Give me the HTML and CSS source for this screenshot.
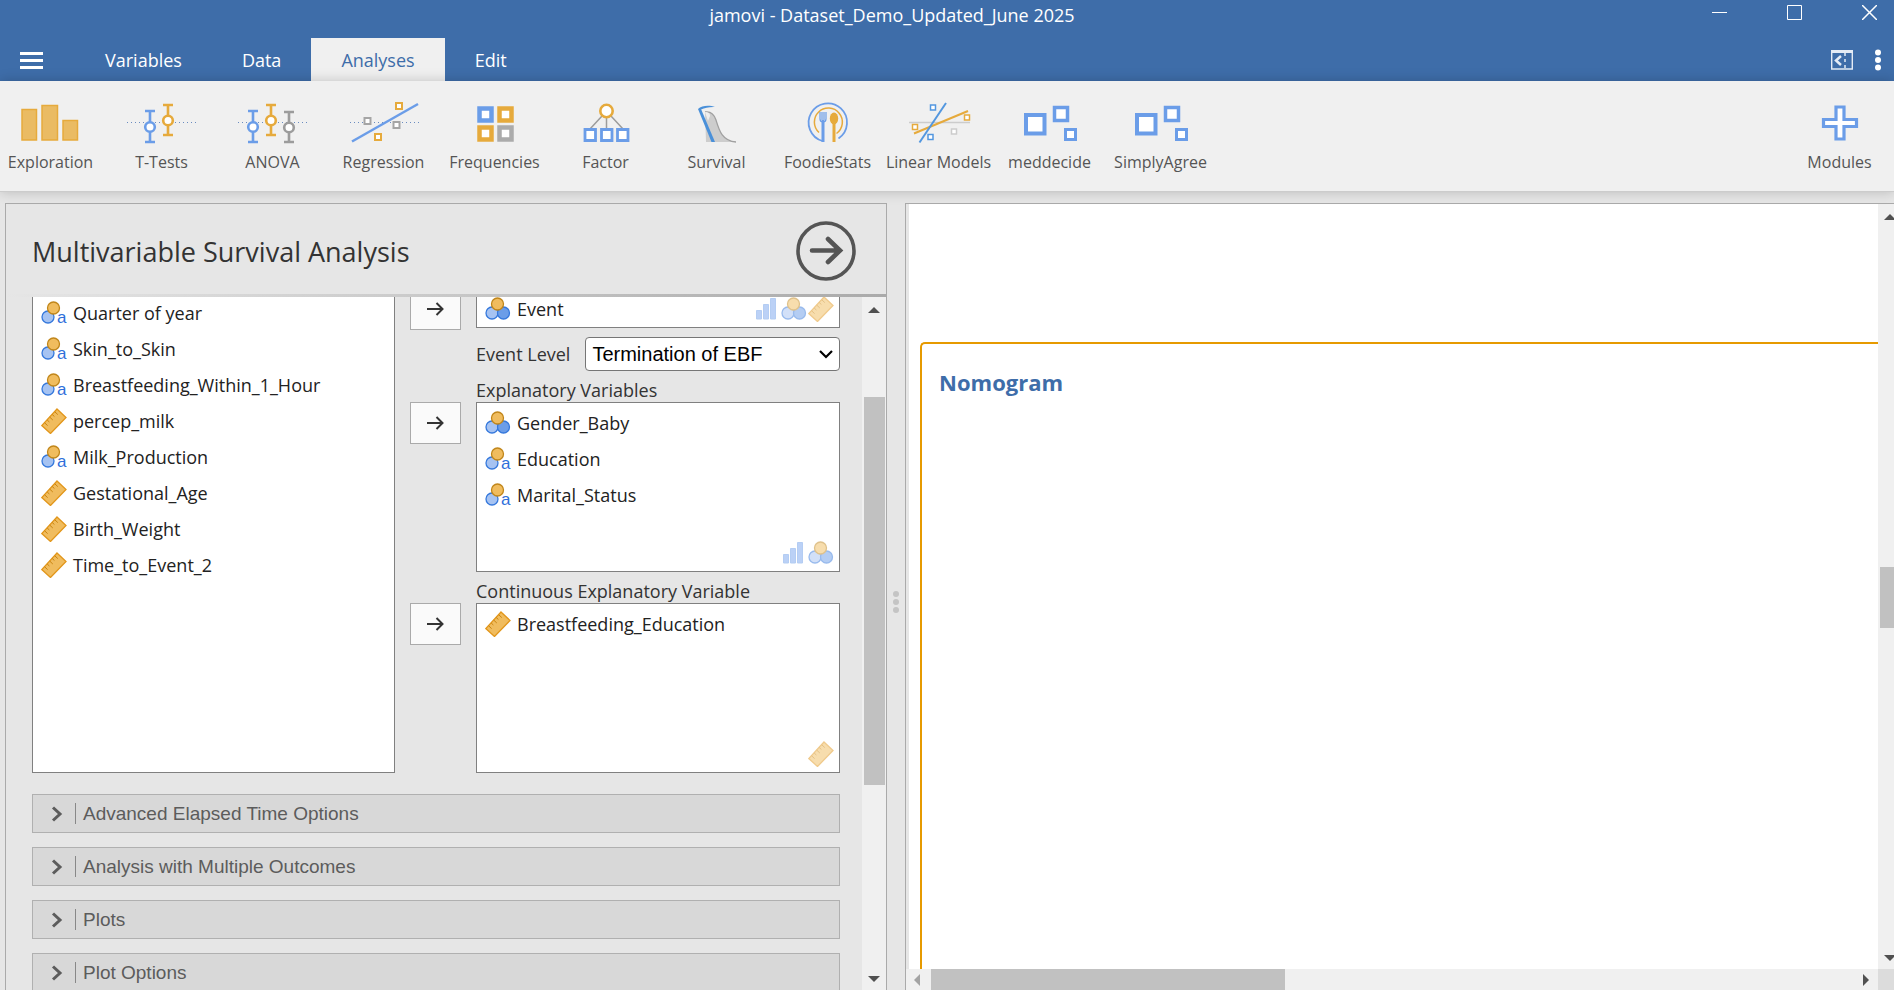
FILE: index.html
```
<!DOCTYPE html>
<html lang="en">
  <head>
    <meta charset="UTF-8" />
    <meta name="viewport" content="width=device-width, initial-scale=1.0" />
    <title>jamovi - Dataset_Demo_Updated_June 2025</title>
    <link rel="stylesheet" href="styles.css">
  </head>
  <body>
    <!-- shared icons -->
    <svg class="sprite" aria-hidden="true">
      <symbol id="nominal" viewBox="0 0 26 26">
        <circle cx="7" cy="17" r="6" fill="#a6c3f2" stroke="#3578dc" stroke-width="1.3" />
        <circle cx="18.500" cy="17" r="6" fill="#6b9de8" stroke="#3578dc" stroke-width="1.3" />
        <circle cx="12.5" cy="8" r="6" fill="#f0bc5e" stroke="#c1861a" stroke-width="1.3" />
      </symbol>
      <symbol id="nominal-text" viewBox="0 0 26 26">
        <circle cx="7" cy="17" r="6" fill="#a6c3f2" stroke="#3578dc" stroke-width="1.3" />
        <circle cx="12.5" cy="8" r="6" fill="#f0bc5e" stroke="#c1861a" stroke-width="1.3" />
        <text x="16" y="23" class="icon-letter">a</text>
      </symbol>
      <symbol id="continuous" viewBox="0 0 26 26">
        <path d="M16 1 L25 9.5 L9.5 25.5 L0.8 17.5 Z" fill="#f0bc5e" stroke="#e2961a" stroke-width="1.3" />
        <path d="M3.6 14.8l3 2.8M6.2 12l2.2 2M8.8 9.2l3 2.8M11.2 6.5l2.2 2M13.8 3.8l3 2.8" stroke="#c98410" stroke-width="1" fill="none" />
      </symbol>
      <symbol id="ordinal" viewBox="0 0 26 26">
        <path d="M2.500 14.500h5v8.500h-5zM9.500 8.500h5v14.500h-5zM16.500 2.500h5v20.500h-5z" fill="#79a5ee" stroke="#6b9de8" />
      </symbol>
      <symbol id="arrow" viewBox="0 0 20 16">
        <path d="M1 8h16M10.500 2l6 6-6 6" fill="none" stroke="#333" stroke-width="2" />
      </symbol>
      <symbol id="chevron" viewBox="0 0 12 16">
        <path d="M2 1.500l7 6.500-7 6.500" fill="none" stroke="#5c5c5c" stroke-width="3" />
      </symbol>
      <symbol id="module" viewBox="0 0 70 50">
        <g fill="#fff" stroke="#6b9de8">
          <path d="M11 17h18.500v18.500h-18.500z" stroke-width="4" />
          <path d="M39.500 9.500h13v13h-13z" stroke-width="3.500" />
          <path d="M50.500 31.500h10v10h-10z" stroke-width="3" />
        </g>
      </symbol>
    </svg>

    <header class="title-bar">
      <div class="title">jamovi - Dataset_Demo_Updated_June 2025</div>
      <div class="window-controls">
        <button aria-label="Minimize"><svg width="15" height="15"><path d="M0 7.500h15" /></svg></button>
        <button aria-label="Maximize"><svg width="15" height="15"><path d="M.5.5h14v14H.5z" /></svg></button>
        <button aria-label="Close"><svg width="15" height="15"><path d="M0 0l15 15M15 0L0 15" stroke-width="1.500" /></svg></button>
      </div>
    </header>

    <nav class="tabs">
      <button class="menu" aria-label="Menu"><span></span><span></span><span></span></button>
      <button class="tab">Variables</button>
      <button class="tab">Data</button>
      <button class="tab active">Analyses</button>
      <button class="tab">Edit</button>
      <div class="tab-tools">
        <button aria-label="Toggle panel">
          <svg width="22" height="20" fill="none" stroke="#e4ebf5">
            <path d="M.7 1h20.600v18H.7z" stroke-width="1.400" />
            <path d="M0 1.500h22" stroke-width="3" />
            <path d="M14 3v16" stroke-width="1.500" stroke-dasharray="3 3" />
            <path d="M10 6l-5 4.500 5 4.500" stroke-width="2.500" />
          </svg>
        </button>
        <button aria-label="More">
          <svg width="6" height="22" fill="#fff"><circle cx="3" cy="3.500" r="3" /><circle cx="3" cy="11" r="3" /><circle cx="3" cy="18.500" r="3" /></svg>
        </button>
      </div>
    </nav>

    <div class="ribbon">
      <button class="tool">
        <svg viewBox="0 0 70 50" fill="#eabb63" stroke="#e6aa3c" stroke-width="1.500">
          <path d="M6 11.500h14.500v30.500H6zM26 7.500h15.500v34.500H26zM47 22.500h14.500v19.500H47z" />
        </svg>
        Exploration
      </button>
      <button class="tool">
        <svg viewBox="0 0 70 50" fill="#fff" stroke-width="2.600">
          <path class="dotted" d="M0 24.500h69" />
          <g stroke="#6b9de8"><path d="M23 13v31M18 13h10M18 44h10" /><circle cx="23" cy="29" r="4.800" /></g>
          <g stroke="#e6aa3c"><path d="M41 7v30M36 7h10M36 37h10" /><circle cx="41" cy="22.500" r="4.800" /></g>
        </svg>
        T-Tests
      </button>
      <button class="tool">
        <svg viewBox="0 0 70 50" fill="#fff" stroke-width="2.600">
          <path class="dotted" d="M0 24.500h69" />
          <g stroke="#6b9de8"><path d="M15 13v31M10 13h10M10 44h10" /><circle cx="15" cy="29" r="4.800" /></g>
          <g stroke="#e6aa3c"><path d="M33 7v30M28 7h10M28 37h10" /><circle cx="33" cy="22.500" r="4.800" /></g>
          <g stroke="#9c9c9c"><path d="M51 14v30M46 14h10M46 44h10" /><circle cx="51" cy="29.500" r="4.800" /></g>
        </svg>
        ANOVA
      </button>
      <button class="tool">
        <svg viewBox="0 0 70 50" fill="#fff" stroke-width="2">
          <path class="dotted" d="M1 24.500h69" />
          <path d="M3 43.500L69 6" stroke="#6b9de8" stroke-width="2.500" />
          <path d="M15.500 20h6v6h-6zM44.500 24h6v6h-6z" stroke="#a5a5a5" />
          <path d="M47 5h6v6h-6zM26 36h6v6h-6z" stroke="#e6aa3c" />
        </svg>
        Regression
      </button>
      <button class="tool">
        <svg viewBox="0 0 70 50" fill="#fff" stroke-width="4.500">
          <path d="M19.500 10.500h12v12h-12z" stroke="#6b9de8" />
          <path d="M39.500 10.500h12v12h-12zM19.500 29.500h12v12h-12z" stroke="#e6aa3c" />
          <path d="M39.500 29.500h12v12h-12z" stroke="#ababab" />
        </svg>
        Frequencies
      </button>
      <button class="tool">
        <svg viewBox="0 0 70 50" fill="#fff">
          <path d="M31 18L19 31M35.500 19v12M40 18l12 13" stroke="#9c9c9c" stroke-width="1.500" />
          <circle cx="35.500" cy="13" r="6.200" stroke="#e6aa3c" stroke-width="2.600" />
          <path d="M14 31.500h10.500v11H14zM30.500 31.500h10.500v11H30.500zM46.500 31.500h10.500v11H46.500z" stroke="#6b9de8" stroke-width="2.800" />
        </svg>
        Factor
      </button>
      <button class="tool">
        <svg viewBox="0 0 70 50" fill="none">
          <path d="M23 14c6-1 9 2 11 8 3 10 6 21 20 22H24z" fill="#cdcdcd" />
          <path d="M23 14c6-1 9 2 11 8 3 10 6 21 20 22" stroke="#a0a0a0" stroke-width="1.300" />
          <path d="M23 14l3 9 2-5c0-3-2-4-5-4z" fill="#eee" />
          <path d="M16 11l3 0 14 33h-3.500z" fill="#4a90d9" />
          <path d="M16 11c4-4 12-4 17-2-6-.3-10 1-14 2.500z" fill="#4a90d9" />
        </svg>
        Survival
      </button>
      <button class="tool">
        <svg viewBox="0 0 70 50" fill="none">
          <path d="M29.500 43A19.200 19.200 0 1 1 45.500 40.500" stroke="#6b9de8" stroke-width="1.800" />
          <path d="M26 34.500A14 14 0 1 1 43.500 35.500" stroke="#e6aa3c" stroke-width="1.500" />
          <path d="M27 14v7c0 4 6 4 6 0v-7M29 14v8M31 14v8" stroke="#6b9de8" stroke-width="1.200" />
          <path d="M30 22v22" stroke="#6b9de8" stroke-width="3" />
          <ellipse cx="41" cy="20.500" rx="4.200" ry="6" fill="#e6aa3c" />
          <path d="M41 24v20" stroke="#e6aa3c" stroke-width="3" />
        </svg>
        FoodieStats
      </button>
      <button class="tool">
        <svg viewBox="0 0 70 50" fill="#fff" stroke-width="1.500">
          <path d="M5 24.500h61" stroke="#ccc" />
          <path d="M10 35.500L64 13" stroke="#e6aa3c" stroke-width="2" />
          <path d="M15.500 44.500L42 5" stroke="#5397df" stroke-width="2" />
          <path d="M26.500 7h5v5h-5zM24 36.500h5v5h-5z" stroke="#5397df" />
          <path d="M8.500 26.500h5v5h-5zM60.500 17h5v5h-5z" stroke="#e6aa3c" />
          <path d="M47.500 31h5v5h-5z" stroke="#ccc" />
        </svg>
        Linear Models
      </button>
      <button class="tool"><svg><use href="#module" /></svg>meddecide</button>
      <button class="tool"><svg><use href="#module" /></svg>SimplyAgree</button>
      <button class="tool modules">
        <svg viewBox="0 0 70 50">
          <path d="M31 9h8v12.500h12.500v7H39v12.500h-8V28.500H18.500v-7H31z" fill="#fff" stroke="#6b9de8" stroke-width="3.200" />
        </svg>
        Modules
      </button>
    </div>

    <main>
      <section class="options">
        <div class="options-header">
          <h1>Multivariable Survival Analysis</h1>
          <button class="hide" aria-label="Hide options">
            <svg width="60" height="60" fill="none" stroke="#555">
              <circle cx="30" cy="30" r="28" stroke-width="3.600" />
              <path d="M16 29.500h28M32 18l12 11.500L32 41" stroke-width="4.600" stroke-linecap="round" />
            </svg>
          </button>
        </div>
        <div class="options-body">
          <div class="form">
            <div class="assign">
              <ul class="box supplier">
                <li><svg><use href="#nominal-text" /></svg>Quarter of year</li>
                <li><svg><use href="#nominal-text" /></svg>Skin_to_Skin</li>
                <li><svg><use href="#nominal-text" /></svg>Breastfeeding_Within_1_Hour</li>
                <li><svg><use href="#continuous" /></svg>percep_milk</li>
                <li><svg><use href="#nominal-text" /></svg>Milk_Production</li>
                <li><svg><use href="#continuous" /></svg>Gestational_Age</li>
                <li><svg><use href="#continuous" /></svg>Birth_Weight</li>
                <li><svg><use href="#continuous" /></svg>Time_to_Event_2</li>
              </ul>
              <div class="targets">
                <div class="target">
                  <button class="move" aria-label="Move to Event"><svg><use href="#arrow" /></svg></button>
                  <div class="box single">
                    <ul>
                      <li><svg><use href="#nominal" /></svg>Event</li>
                    </ul>
                    <div class="allowed">
                      <svg><use href="#ordinal" /></svg><svg><use href="#nominal" /></svg><svg><use href="#continuous" /></svg>
                    </div>
                  </div>
                </div>
                <div class="level">
                  <label for="event-level">Event Level</label>
                  <div class="select">
                    <select id="event-level">
                      <option>Termination of EBF</option>
                    </select>
                    <svg width="14" height="9"><path d="M1 1l6 6 6-6" fill="none" stroke="#000" stroke-width="2.200" /></svg>
                  </div>
                </div>
                <div class="target">
                  <h2>Explanatory Variables</h2>
                  <button class="move" aria-label="Move to Explanatory Variables"><svg><use href="#arrow" /></svg></button>
                  <div class="box">
                    <ul>
                      <li><svg><use href="#nominal" /></svg>Gender_Baby</li>
                      <li><svg><use href="#nominal-text" /></svg>Education</li>
                      <li><svg><use href="#nominal-text" /></svg>Marital_Status</li>
                    </ul>
                    <div class="allowed">
                      <svg><use href="#ordinal" /></svg><svg><use href="#nominal" /></svg>
                    </div>
                  </div>
                </div>
                <div class="target">
                  <h2>Continuous Explanatory Variable</h2>
                  <button class="move" aria-label="Move to Continuous Explanatory Variable"><svg><use href="#arrow" /></svg></button>
                  <div class="box">
                    <ul>
                      <li><svg><use href="#continuous" /></svg>Breastfeeding_Education</li>
                    </ul>
                    <div class="allowed">
                      <svg><use href="#continuous" /></svg>
                    </div>
                  </div>
                </div>
              </div>
            </div>
            <div class="sections">
              <button><svg><use href="#chevron" /></svg><span>Advanced Elapsed Time Options</span></button>
              <button><svg><use href="#chevron" /></svg><span>Analysis with Multiple Outcomes</span></button>
              <button><svg><use href="#chevron" /></svg><span>Plots</span></button>
              <button><svg><use href="#chevron" /></svg><span>Plot Options</span></button>
            </div>
          </div>
          <div class="scroll-y">
            <i class="up"></i>
            <div class="track"><div class="thumb"></div></div>
            <i class="down"></i>
          </div>
        </div>
      </section>

      <div class="splitter"><span></span><span></span><span></span></div>

      <section class="results">
        <div class="page">
          <article>
            <h2>Nomogram</h2>
          </article>
        </div>
        <div class="scroll-y">
          <i class="up"></i>
          <div class="track"><div class="thumb"></div></div>
          <i class="down"></i>
        </div>
        <div class="scroll-x">
          <i class="left"></i>
          <div class="track"><div class="thumb"></div></div>
          <i class="right"></i>
        </div>
        <div class="corner"></div>
      </section>
    </main>
  </body>
</html>
```
FILE: styles.css
```
* {
  box-sizing: border-box;
}
body {
  margin: 0;
  height: 100vh;
  display: flex;
  flex-direction: column;
  overflow: hidden;
  background-color: #e6e6e6;
  color: #333;
  font-family: "Segoe UI", "Open Sans", "Noto Sans", sans-serif;
  font-size: 18px;
}
button {
  margin: 0;
  padding: 0;
  border: none;
  background: none;
  font: inherit;
  color: inherit;
}
svg {
  display: block;
  flex: none;
}
h1,
h2,
ul {
  margin: 0;
  padding: 0;
  font-weight: normal;
  list-style: none;
}
.sprite {
  display: none;
}
.icon-letter {
  font-family: "Liberation Sans", Arial, sans-serif;
  font-size: 17px;
  fill: #2f6fdb;
}

/* title bar */
.title-bar {
  display: grid;
  height: 38px;
  background-color: #3e6da9;
  color: white;
}
.title {
  grid-area: 1 / 1;
  justify-self: center;
  margin-right: 110px;
  line-height: 30px;
}
.window-controls {
  grid-area: 1 / 1;
  justify-self: end;
  align-self: start;
  display: flex;
  gap: 60px;
  padding: 5px 17px;
}
.window-controls svg {
  fill: none;
  stroke: white;
}

/* tabs */
.tabs {
  display: flex;
  height: 43px;
  background-color: #3e6da9;
  color: white;
}
.menu {
  display: flex;
  flex-direction: column;
  align-items: center;
  justify-content: center;
  gap: 4px;
  width: 63px;
  margin-right: 12px;
  padding-top: 2px;
}
.menu span {
  width: 23px;
  height: 3px;
  background-color: white;
}
.tab {
  padding: 0 30px;
}
.tab.active {
  background-color: #f0f0f0;
  color: #3e6da9;
}
.tab-tools {
  display: flex;
  align-items: center;
  gap: 22px;
  margin-left: auto;
  padding-right: 13px;
}

/* ribbon */
.ribbon {
  position: relative;
  display: flex;
  gap: 10px;
  height: 111px;
  padding-right: 4px;
  background-color: #f0f0f0;
  border-bottom: 1px solid #ccc;
  box-shadow: 0 0 12px rgba(0, 0, 0, 0.2);
}
.tool {
  display: flex;
  flex-direction: column;
  align-items: center;
  width: 101px;
  padding-top: 17px;
  color: #555;
  font-size: 16px;
  line-height: 28px;
  white-space: nowrap;
}
.tool svg {
  width: 70px;
  height: 50px;
}
.modules {
  margin-left: auto;
}
.dotted {
  stroke: #6a8cc0;
  stroke-width: 1;
  stroke-dasharray: 1 3;
}

/* main panels */
main {
  flex: 1;
  display: grid;
  grid-template-columns: 33fr 18px 37fr;
  grid-template-rows: 100%;
  min-height: 0;
  padding: 11px 0 0 5px;
}
.options {
  display: flex;
  flex-direction: column;
  min-width: 0;
  border: 1px solid #aaa;
  border-bottom: none;
}
.options-header {
  display: flex;
  align-items: center;
  justify-content: space-between;
  height: 93px;
  padding: 4px 30px 0 26px;
  border-bottom: 3px solid;
  border-image: linear-gradient(to right, #e6e6e6, #aaa) 1;
  border-width: 0 0 3px;
}
h1 {
  font-size: 27px;
}
.options-body {
  flex: 1;
  display: flex;
  min-height: 0;
  overflow: hidden;
}
/* scrolled part way down, so the first row is cut by the header */
.form {
  flex: 1;
  margin-top: -9px;
  padding: 0 22px 0 26px;
}
.assign {
  display: grid;
  grid-template-columns: 1fr calc(50% + 26px);
  gap: 15px;
}
.box {
  position: relative;
  height: 170px;
  padding: 2px 8px;
  background-color: white;
  border: 1px solid #808080;
  color: #222;
}
.box li {
  display: flex;
  align-items: center;
  gap: 6px;
  height: 36px;
}
.box svg {
  width: 26px;
  height: 26px;
}
.supplier {
  height: auto;
  padding-top: 6px;
}
.single {
  height: 40px;
}
.allowed {
  position: absolute;
  right: 5px;
  bottom: 5px;
  display: flex;
  gap: 1px;
  opacity: 0.5;
}
.targets {
  display: flex;
  flex-direction: column;
  gap: 7px;
}
.target {
  display: grid;
  grid-template-columns: 51px 1fr;
  column-gap: 15px;
}
.target h2 {
  grid-column: 2;
  font-size: 18px;
  line-height: 24px;
}
.move {
  display: flex;
  align-items: center;
  justify-content: center;
  height: 42px;
  background-color: #fafafa;
  border: 1px solid #aaa;
}
.move svg {
  width: 20px;
  height: 16px;
}
.level {
  display: flex;
  align-items: center;
  gap: 15px;
  padding-left: 66px;
}
.level label {
  white-space: nowrap;
}
.select {
  position: relative;
  flex: 1;
}
.select select {
  display: block;
  width: 100%;
  height: 34px;
  padding: 0 6px;
  appearance: none;
  background-color: white;
  border: 1px solid #767676;
  border-radius: 4px;
  color: black;
  font-family: "Liberation Sans", Arial, sans-serif;
  font-size: 20px;
}
.select svg {
  position: absolute;
  top: 13px;
  right: 7px;
  pointer-events: none;
}
.sections {
  display: flex;
  flex-direction: column;
  gap: 14px;
  margin-top: 21px;
}
.sections button {
  display: flex;
  align-items: center;
  gap: 12px;
  height: 39px;
  padding-left: 18px;
  background-color: #d8d8d8;
  border: 1px solid #b0b0b0;
  color: #5c5c5c;
  font-family: "Liberation Sans", Arial, sans-serif;
  font-size: 19px;
}
.sections svg {
  width: 12px;
  height: 16px;
}
.sections span {
  padding-left: 7px;
  border-left: 1px solid #888;
  line-height: 21px;
}

/* scroll bars */
.scroll-y,
.scroll-x {
  display: flex;
  align-items: center;
  background-color: #f0f0f0;
}
.scroll-y {
  flex-direction: column;
  width: 24px;
  padding: 10px 0 8px;
}
.track {
  flex: 1;
  display: flex;
}
.thumb {
  background-color: #c1c1c1;
}
.scroll-y .thumb {
  width: 21px;
}
.options .track {
  padding-top: 84px;
}
.options .thumb {
  height: 67%;
}
.up,
.down {
  border: 6px solid transparent;
}
.up {
  border-top: none;
  border-bottom-color: #505050;
}
.down {
  border-bottom: none;
  border-top-color: #505050;
}
.left,
.right {
  border: 6px solid transparent;
}
.left {
  border-left: none;
  border-right-color: #a3a3a3;
}
.right {
  border-right: none;
  border-left-color: #505050;
}

.splitter {
  display: flex;
  flex-direction: column;
  align-items: center;
  justify-content: center;
  gap: 2px;
  padding-top: 10px;
}
.splitter span {
  width: 6px;
  height: 6px;
  border-radius: 50%;
  background-color: #c4c4c4;
}

/* results */
.results {
  display: grid;
  grid-template-columns: 1fr 16px;
  grid-template-rows: 1fr 21px;
  min-width: 0;
  border: 1px solid #aaa;
  border-width: 1px 0 0 1px;
  overflow: hidden;
}
.page {
  display: flex;
  margin-left: 3px;
  padding: 138px 0 0 11px;
  background-color: white;
}
article {
  flex: 1;
  padding: 23px 17px;
  border: 2px solid #e69a00;
  border-width: 2px 0 0 2px;
  border-top-left-radius: 5px;
}
article h2 {
  color: #3e6da9;
  font-size: 22px;
  font-weight: bold;
  line-height: 30px;
}
.results .scroll-y {
  align-items: flex-start;
  padding-left: 2px;
}
.results .scroll-y i {
  margin-left: 4px;
}
.results .scroll-y .track {
  padding-top: 347px;
}
.results .scroll-y .thumb {
  height: 61px;
}
.scroll-x {
  padding: 0 9px 0 8px;
}
.scroll-x .track {
  height: 100%;
  padding-left: 11px;
}
.scroll-x .thumb {
  width: 38%;
}
.corner {
  background-color: #dcdcdc;
}
```
